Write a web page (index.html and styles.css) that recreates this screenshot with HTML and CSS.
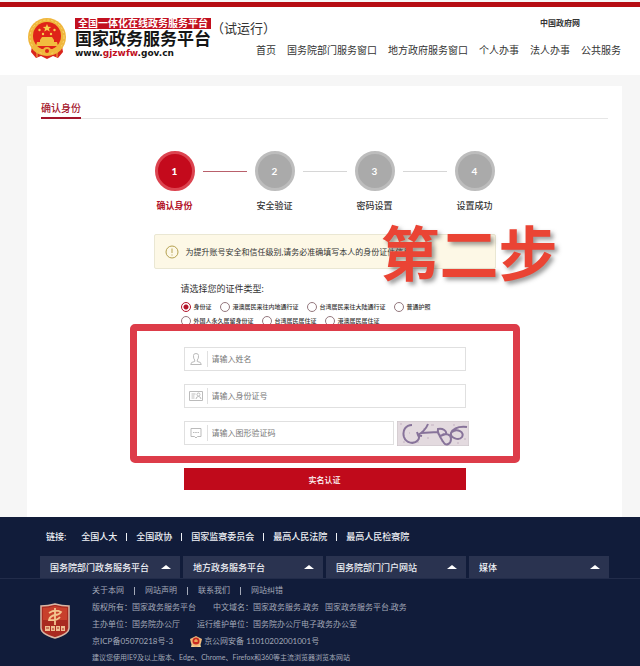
FILE: index.html
```
<!DOCTYPE html>
<html lang="zh-CN">
<head>
  <meta charset="UTF-8" />
  <meta name="viewport" content="width=device-width, initial-scale=1.0"/>
  <title>国家政务服务平台 - 确认身份</title>
  <link rel="stylesheet" href="styles.css">
</head>
<body>
  <header>
    <svg class="emblem" viewBox="0 0 40 41">
      <path d="M5 28 L35 28 L36 34 L31 40 L26 38 L20 41 L14 38 L9 40 L4 34Z" fill="#d9251c"/>
      <circle cx="20" cy="19" r="19" fill="#f0b63c"/>
      <circle cx="20" cy="19" r="17" fill="none" stroke="#f8d873" stroke-width="1" stroke-dasharray="2 2"/>
      <circle cx="20" cy="18" r="14" fill="#df2318"/>
      <path d="M20 6l1.2 2.7 3 .2-2.3 1.9.8 2.8-2.7-1.5-2.7 1.5.8-2.8-2.3-1.9 3-.2z" fill="#f6cf4c"/>
      <g fill="#f6cf4c"><circle cx="12.500" cy="12" r="1.200"/><circle cx="27.500" cy="12" r="1.200"/><circle cx="16" cy="16" r="1.200"/><circle cx="24" cy="16" r="1.200"/></g>
      <path d="M13 22l2-3h10l2 3v2h3l1 4H9l1-4h3z" fill="#f2bd3e"/>
      <path d="M6 28q14 7 28 0v3q-6 4-8 3-6-3-12 0-2 1-8-3z" fill="#f0b63c"/>
      <circle cx="20" cy="33" r="4" fill="#f0b63c"/>
      <circle cx="20" cy="33" r="2" fill="#df2318"/>
      <path d="M10 34v5M30 34v5" stroke="#f0b63c" stroke-width="1"/>
    </svg>
    <div class="brand">
      <div class="slogan">全国一体化在线政务服务平台</div>
      <h1>国家政务服务平台</h1>
      <div class="domain">www.<span>gjzwfw</span>.gov.cn</div>
    </div>
    <div class="trial">（试运行）</div>
    <div class="menu">
      <a class="gov" href="#">中国政府网</a>
      <nav>
        <a href="#">首页</a>
        <a href="#">国务院部门服务窗口</a>
        <a href="#">地方政府服务窗口</a>
        <a href="#">个人办事</a>
        <a href="#">法人办事</a>
        <a href="#">公共服务</a>
      </nav>
    </div>
  </header>

  <main>
    <div class="tab"><h2>确认身份</h2></div>

    <div class="steps">
      <div class="step active"><b>1</b><span>确认身份</span></div>
      <i class="line active"></i>
      <div class="step"><b>2</b><span>安全验证</span></div>
      <i class="line"></i>
      <div class="step"><b>3</b><span>密码设置</span></div>
      <i class="line"></i>
      <div class="step"><b>4</b><span>设置成功</span></div>
    </div>

    <div class="notice">
      <svg viewBox="0 0 14 14"><circle cx="7" cy="7" r="6" fill="none" stroke="#b5a150"/><path d="M7 3.500v4.500M7 9.500v1" stroke="#b5a150"/></svg>
      <span>为提升账号安全和信任级别,请务必准确填写本人的身份证件信息</span>
      <div class="stamp">第二步</div>
    </div>

    <form>
      <fieldset>
        <legend>请选择您的证件类型:</legend>
        <div class="types">
          <label><input type="radio" name="type" checked>身份证</label>
          <label><input type="radio" name="type">港澳居民来往内地通行证</label>
          <label><input type="radio" name="type">台湾居民来往大陆通行证</label>
          <label><input type="radio" name="type">普通护照</label>
        </div>
        <div class="types">
          <label><input type="radio" name="type">外国人永久居留身份证</label>
          <label><input type="radio" name="type">台湾居民居住证</label>
          <label><input type="radio" name="type">港澳居民居住证</label>
        </div>
      </fieldset>

      <div class="fields">
        <div class="field">
          <svg viewBox="0 0 14 14"><path d="M4.500 3.500Q4.500 1.500 7 1.500T9.500 3.500Q9.800 6.500 8.300 8v1.500q4 .3 4 3H1.700q0-2.700 4-3V8Q4.200 6.500 4.500 3.500z"/></svg>
          <input type="text" placeholder="请输入姓名" aria-label="姓名">
        </div>
        <div class="field">
          <svg viewBox="0 0 14 14"><path d="M.5 2.500h13v9H.5zM2.500 5h4M2.500 7h3M2.500 9h3"/><circle cx="9.500" cy="5.500" r="1.500"/><path d="M7 10q.3-2.500 2.500-2.500T12 10"/></svg>
          <input type="text" placeholder="请输入身份证号" aria-label="身份证号">
        </div>
        <div class="row">
          <div class="field">
            <svg viewBox="0 0 14 14"><path d="M2 2.500h10v8H8.500L7 12l-1.500-1.500H2zM4 6.500h1.500M6.200 6.500h1.600M8.500 6.500H10"/></svg>
            <input type="text" placeholder="请输入图形验证码" aria-label="图形验证码">
          </div>
          <button type="button" class="captcha" aria-label="换一张验证码">
            <svg viewBox="0 0 72 25">
              <rect width="72" height="25" fill="#e3dadf" stroke="#c9c2c6" stroke-width="1"/>
              <path d="M3 3h2M20 21h2M34 4h3M44 20h2M12 12h1M56 4h2M67 18h2M30 17h2M26 8h2M6 21h2M60 22h2" stroke="#d3c5d0"/>
              <path d="M15 4C9 4 5 9 7 16c2 6 10 8 14 3 2-2 1-4 0-6M31 3c-2 5-5 8-10 11l-1-3m1 3l4 1M24 12l17-1M41 8c5-1 9 2 8 5l-6 2c-3-3-2-5-2-7zM45 14c3-2 9-1 9 4 0 5-5 7-7 4-2-3-4-5-6-11M70 6c-9-1-14 2-16 6-1 5 8 8 11 4 3-5-5-9-10-5"/>
            </svg>
          </button>
        </div>
        <div class="frame"></div>
      </div>
      <button type="submit" class="submit">实名认证</button>
    </form>
  </main>

  <footer>
    <div class="links">
      <span>链接:</span>
      <a href="#">全国人大</a><i></i>
      <a href="#">全国政协</a><i></i>
      <a href="#">国家监察委员会</a><i></i>
      <a href="#">最高人民法院</a><i></i>
      <a href="#">最高人民检察院</a>
    </div>
    <div class="menus">
      <button>国务院部门政务服务平台</button>
      <button>地方政务服务平台</button>
      <button>国务院部门门户网站</button>
      <button>媒体</button>
    </div>
    <div class="info">
      <svg class="badge" viewBox="0 0 30 36">
        <path d="M1 3Q8 3 15 1q7 2 14 2v22q0 6-14 10Q1 31 1 25z" fill="#a92a20" stroke="#d9b7a5" stroke-width="1.500"/>
        <path d="M3 5q6 0 12-2 6 2 12 2v12H3z" fill="#c8402c"/>
        <path d="M15 5v17M9 10q6-4 12-1-2 3-6 3-5 1-6 5 8 1 11-3" fill="none" stroke="#f3c58f" stroke-width="1.800"/>
        <path d="M5 23h5v5H5zM11 23h4v5h-4zM16 23h4v5h-4zM21 23h4v5h-4z" fill="#eebd90"/>
        <path d="M6 25h3M12 26h2M17 25h2M22 26h2" stroke="#a92a20"/>
      </svg>
      <div class="copy">
        <p class="about"><a href="#">关于本网</a><i></i><a href="#">网站声明</a><i></i><a href="#">联系我们</a><i></i><a href="#">网站纠错</a></p>
        <p><span>版权所有：国家政务服务平台</span><span>中文域名：国家政务服务.政务&emsp;国家政务服务平台.政务</span></p>
        <p><span>主办单位：国务院办公厅</span><span>运行维护单位：国务院办公厅电子政务办公室</span></p>
        <p><a href="#">京ICP备05070218号-3</a><a class="police" href="#">
          <svg viewBox="0 0 12 12"><path d="M2 7h8l1 4H1z" fill="#f3d79a"/><path d="M6 0l4 2 2 1-1 4q-1 3-5 4-4-1-5-4L0 3l2-1z" fill="#efb97c"/><circle cx="6" cy="5" r="3.500" fill="#c92a20"/><path d="M4 5h4M6 3v3" stroke="#f6d067"/></svg>京公网安备 11010202001001号</a></p>
        <p class="tip">建议您使用IE9及以上版本、Edge、Chrome、Firefox和360等主流浏览器浏览本网站</p>
      </div>
    </div>
  </footer>
</body>
</html>
```
FILE: styles.css
```
* {
  box-sizing: border-box;
}

body {
  margin: 0;
  background: #f6f6f6;
  color: #333;
  font-family: Lato, "Noto Sans CJK SC", sans-serif;
  font-size: 8px;
}

a {
  color: inherit;
  text-decoration: none;
}

h1, h2, p {
  margin: 0;
}

button, input {
  font-family: inherit;
}

header {
  display: flex;
  align-items: flex-start;
  margin-top: 2px;
  padding: 11px 19px 16px 27px;
  background: #fff;
  border-top: 5px solid #b60d13;
}

.emblem {
  flex: none;
  width: 40px;
  height: 41px;
  margin-right: 8px;
}

.brand {
  flex: none;
  width: 136px;
  color: #151515;
}

.slogan {
  background: #c2101f;
  color: #fff;
  font-size: 10px;
  font-weight: bold;
  line-height: 11px;
  text-align: center;
  white-space: nowrap;
}

h1 {
  font-size: 17px;
  line-height: 20px;
  white-space: nowrap;
}

.domain {
  font-family: "DejaVu Sans", sans-serif;
  font-size: 9px;
  font-weight: bold;
  line-height: 9px;
}

.domain span {
  color: #c2101f;
}

.trial {
  flex: none;
  font-size: 13px;
  line-height: 21px;
  white-space: nowrap;
}

/* the nav is wider than its column and runs out to the left, below .trial */
.menu {
  flex: 1;
  min-width: 0;
  display: flex;
  flex-direction: column;
  align-items: flex-end;
}

.gov {
  margin-right: 41px;
  font-weight: bold;
  line-height: 10px;
}

nav {
  display: flex;
  gap: 11px;
  margin-top: 14px;
  font-size: 10px;
  line-height: 16px;
  white-space: nowrap;
}

main {
  margin: 11px 18px 0 27px;
  padding: 14px 14px 27px;
  background: #fff;
}

.tab {
  display: flex;
  border-bottom: 1px solid #e6e6e6;
}

.tab h2 {
  margin-bottom: -1px;
  border-bottom: 2px solid #a3142a;
  color: #a3142a;
  font-size: 10px;
  font-weight: 500;
  line-height: 17px;
}

.steps {
  display: flex;
  justify-content: center;
  margin-top: 32px;
}

.step {
  width: 40px;
  text-align: center;
  font-size: 9px;
  font-weight: 500;
  line-height: 14px;
  white-space: nowrap;
}

.step b {
  display: block;
  height: 40px;
  margin-bottom: 8px;
  border: 3px solid #bdbdbd;
  border-radius: 50%;
  background: #aaa;
  color: #fff;
  font-size: 10px;
  line-height: 34px;
}

.step.active {
  color: #b3142a;
  font-weight: bold;
}

.step.active b {
  background: #c40a1c;
  border-color: #dc4450;
}

.line {
  width: 44px;
  height: 1px;
  margin: 20px 8px 0;
  background: #d6d6d6;
}

.line.active {
  background: #b9606b;
}

.notice {
  position: relative;
  display: flex;
  align-items: center;
  gap: 7px;
  width: 342px;
  height: 35px;
  margin: 21px auto 0;
  padding-left: 10px;
  background: #fdf8e6;
  border: 1px solid #eae7d3;
  border-radius: 2px;
  white-space: nowrap;
}

.notice svg {
  width: 14px;
  height: 14px;
}

/* big red caption lying over the notice */
.stamp {
  position: absolute;
  left: 226px;
  top: -11px;
  z-index: 2;
  color: #ea4434;
  font-size: 59px;
  font-weight: bold;
  line-height: 60px;
  text-shadow: 3px 3px 4px rgba(60, 60, 60, 0.5);
}

form {
  width: 282px;
  margin: 13px auto 0;
}

fieldset {
  margin: 0 0 0 -3px;
  padding: 0;
  border: 0;
}

legend {
  padding: 0;
  margin-bottom: 6px;
  font-size: 9px;
  line-height: 14px;
}

.types {
  display: flex;
  gap: 8px;
  margin-bottom: 4px;
  font-size: 6px;
  font-weight: 500;
  line-height: 10px;
  white-space: nowrap;
}

.types label {
  display: flex;
  align-items: center;
  gap: 3px;
}

.types input {
  appearance: none;
  width: 10px;
  height: 10px;
  margin: 0;
  border: 1px solid #94787e;
  border-radius: 50%;
}

.types input:checked {
  border-color: #b3142a;
  background: radial-gradient(circle, #b3142a 2px, #fff 3px);
}

.fields {
  position: relative;
  display: flex;
  flex-direction: column;
  gap: 13px;
  margin-top: 17px;
}

.field {
  display: flex;
  align-items: center;
  height: 24px;
  border: 1px solid #e0e0e0;
}

.field svg {
  width: 14px;
  height: 14px;
  margin: 0 4px;
  fill: none;
  stroke: #bbb;
}

.field input {
  flex: 1;
  min-width: 0;
  height: 16px;
  padding: 0 4px;
  border: 0;
  border-left: 1px solid #e0e0e0;
  outline: none;
  font-size: 8px;
}

.field input::placeholder {
  color: #777;
}

.row {
  display: flex;
  gap: 3px;
}

.row .field {
  flex: 0 0 210px;
}

.captcha {
  flex: 0 0 72px;
  height: 25px;
  padding: 0;
  border: 0;
  background: none;
}

.captcha svg {
  display: block;
  fill: none;
  stroke: #87739a;
  stroke-width: 2;
}

.frame {
  position: absolute;
  inset: -23px -54px -17px;
  border: 7px solid #dd3c49;
  border-radius: 5px;
  pointer-events: none;
}

.submit {
  width: 100%;
  height: 22px;
  margin-top: 22px;
  padding: 0;
  border: 0;
  background: #c00a1b;
  color: #fff;
  font-size: 8px;
  font-weight: 500;
}

footer {
  background: #111c3a;
  color: #a3a9b8;
  white-space: nowrap;
}

.links {
  display: flex;
  align-items: center;
  padding: 13px 46px 12px;
  color: #eef0f5;
  font-size: 9px;
  font-weight: 500;
  line-height: 14px;
}

.links span {
  margin-right: 15px;
}

.links i, .about i {
  width: 1px;
  height: 8px;
  margin: 0 10px;
  background: currentColor;
}

.links i {
  margin: 0 9px;
}

.menus {
  display: grid;
  grid-template-columns: repeat(4, 1fr);
  gap: 3px;
  padding: 0 31px 0 40px;
  border-bottom: 1px solid #222c4a;
}

.menus button {
  display: flex;
  align-items: center;
  justify-content: space-between;
  height: 22px;
  padding: 0 9px 0 10px;
  border: 0;
  background: #2a3350;
  color: #eef0f5;
  font-size: 9px;
  font-weight: 500;
}

.menus button::after {
  content: "";
  border: 5px solid transparent;
  border-top: 0;
  border-bottom: 4px solid #fff;
}

.info {
  display: flex;
  align-items: center;
  gap: 22px;
  padding: 3px 40px 2px;
}

.badge {
  width: 30px;
  height: 36px;
  margin-bottom: 6px;
}

.copy p {
  display: flex;
  align-items: center;
  gap: 17px;
  line-height: 17px;
}

.copy .about {
  gap: 0;
}

.police {
  display: flex;
  align-items: center;
  gap: 2px;
}

.police svg {
  width: 12px;
  height: 12px;
}

.copy .tip {
  font-size: 7px;
  line-height: 15px;
}
```
